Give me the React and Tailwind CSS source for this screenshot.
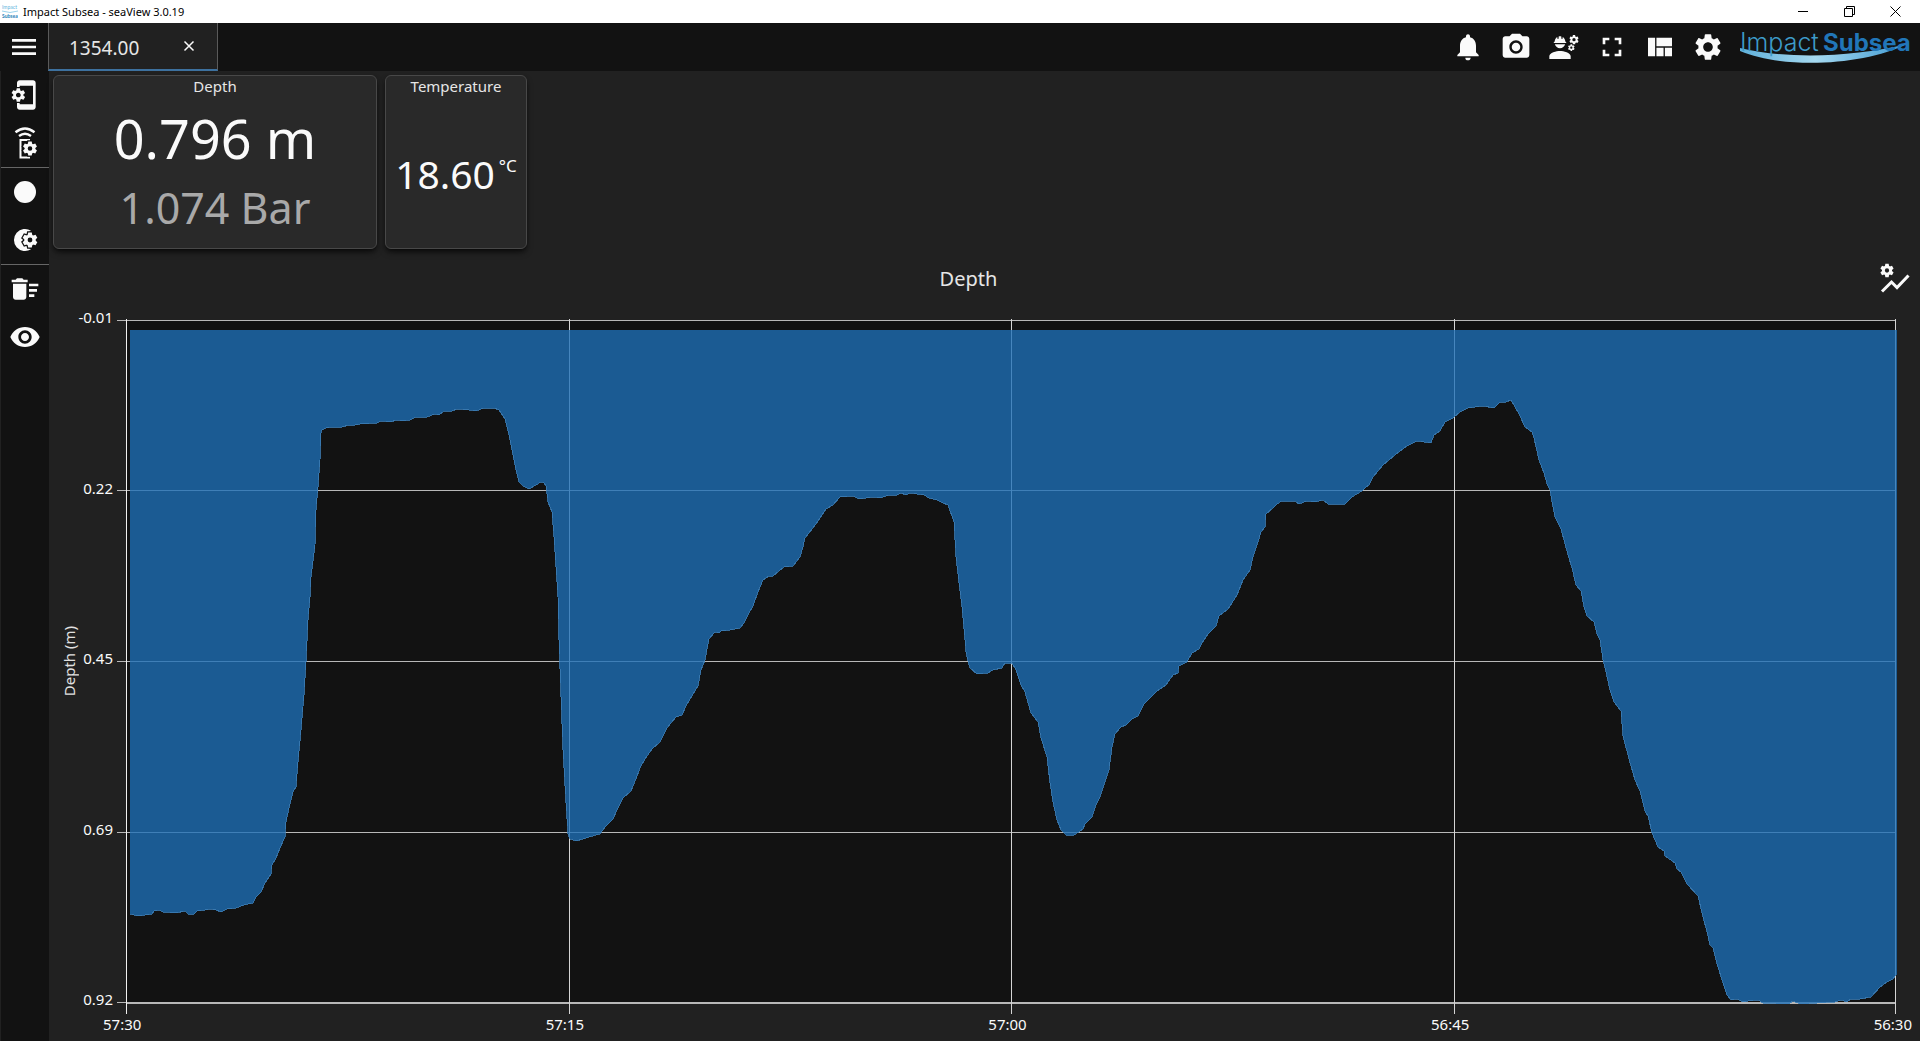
import {
  MdCameraAlt,
  MdDeleteSweep,
  MdEngineering,
  MdFullscreen,
  MdMenu,
  MdNotifications,
  MdPhonelinkSetup,
  MdSettings,
  MdViewQuilt,
  MdVisibility,
} from 'react-icons/md'

// depth trace in chart units, oldest sample first
const TRACE = `130,914 134,915 138,916 145,915 152,914 154,911 159,910 163,912 176,913 185,911 188,914 194,914
197,911 205,910 210,909 216,910 221,912 227,909 236,908 244,905 253,903 256,897 261,892 265,883 271,874 272,865
276,858 280,848 285,837 286,822 289,808 293,792 296,787 298,762 301,730 304,695 306,662 308,620 310,597 311,577
315,545 316,510 318,487 320,460 321,433 322,430 326,428 331,427 342,427 349,425 355,425 360,424 377,423 381,421
390,422 397,420 402,421 410,420 416,417 427,417 435,414 439,415 444,411 452,411 457,409 469,410 476,411 484,408
494,408 499,410 501,413 505,419 509,435 512,450 516,470 519,482 523,486 529,489 536,485 541,482 544,483 546,486
548,502 552,512 554,537 556,567 558,597 559,640 561,697 563,750 566,803 568,834 570,839 576,841 583,839 589,837
600,834 606,826 613,819 618,808 623,798 631,791 633,786 636,779 640,768 645,759 652,749 660,742 667,728 676,717
682,715 686,706 692,696 698,686 701,670 705,660 709,639 715,632 719,633 721,631 730,630 740,628 744,623 749,613
753,606 758,592 763,580 769,576 773,576 784,567 793,566 800,557 803,547 805,538 816,524 826,509 833,505 840,497
853,496 859,499 866,498 874,497 880,498 889,495 897,495 901,493 906,495 910,493 924,495 929,498 937,500 943,503
948,505 954,522 956,557 959,583 962,607 965,640 966,652 968,661 970,668 977,674 988,673 993,670 1002,668 1005,663
1012,663 1016,670 1021,685 1025,692 1031,713 1038,722 1041,738 1047,757 1050,783 1053,802 1057,820 1061,830
1066,835 1074,835 1079,832 1083,829 1085,824 1092,817 1096,805 1100,797 1105,782 1109,770 1112,747 1115,734
1121,727 1126,725 1132,719 1138,716 1144,704 1149,699 1157,691 1166,685 1168,682 1173,675 1178,673 1179,666
1187,662 1192,653 1199,649 1202,643 1208,634 1216,626 1219,616 1228,609 1232,603 1237,595 1243,580 1250,570
1253,557 1258,542 1261,532 1265,527 1266,514 1273,508 1277,504 1282,501 1295,501 1299,504 1307,501 1315,502
1323,500 1328,504 1345,504 1352,497 1362,491 1365,488 1369,485 1373,477 1383,465 1395,455 1407,446 1417,441
1431,443 1434,435 1440,431 1445,422 1453,418 1460,412 1468,408 1483,406 1494,408 1500,402 1506,402 1511,400
1519,414 1525,427 1532,432 1534,438 1539,460 1544,473 1547,484 1550,490 1552,502 1555,517 1561,529 1568,555
1572,568 1576,585 1581,591 1584,607 1587,616 1594,622 1597,634 1600,640 1603,660 1606,672 1610,690 1614,702
1621,711 1623,736 1629,759 1635,780 1640,791 1645,811 1648,816 1652,833 1658,847 1664,851 1665,856 1675,863
1677,869 1681,872 1687,884 1698,896 1702,913 1707,932 1710,945 1713,948 1717,964 1723,983 1727,995 1731,1000
1737,999 1743,1002 1748,1001 1758,1000 1763,1003 1789,1004 1793,1001 1800,1004 1835,1002 1841,1000 1847,1002
1851,999 1860,999 1871,997 1880,987 1887,982 1893,979 1896,975`

const GRID_X = [569, 1011, 1454]
const GRID_Y = [490, 661, 832]
const DEPTH_LABELS = ['-0.01', '0.22', '0.45', '0.69', '0.92']
const TIME_LABELS = ['57:30', '57:15', '57:00', '56:45', '56:30']

const TOOLS = [
  { label: 'Notifications', icon: MdNotifications },
  { label: 'Screenshot', icon: MdCameraAlt },
  { label: 'Engineer tools', icon: MdEngineering },
  { label: 'Full screen', icon: MdFullscreen },
  { label: 'Layout', icon: MdViewQuilt },
  { label: 'Settings', icon: MdSettings },
]

const TEETH = [0, 60, 120, 180, 240, 300]
const TOOTH = 'M-2.4 -4.4L-1.8 -7.400H1.8L2.4 -4.4Z'

// small cog centred on cx, cy
const Cog = ({ cx, cy, scale = 1, outline = false }) => (
  <g transform={`translate(${cx} ${cy}) scale(${scale})`}>
    {outline && (
      <g fill="#121212" stroke="#121212" strokeWidth="2.6">
        <circle r="5.6" />
        {TEETH.map((a) => (
          <path key={a} d={TOOTH} transform={`rotate(${a})`} />
        ))}
      </g>
    )}
    <circle r="4" fill="none" stroke="currentColor" strokeWidth="3.2" />
    {TEETH.map((a) => (
      <path key={a} d={TOOTH} fill="currentColor" stroke="none" transform={`rotate(${a})`} />
    ))}
  </g>
)

const WirelessSetupIcon = () => (
  <svg className="size-8" viewBox="0 0 32 32" fill="none" stroke="currentColor">
    <path d="M6.5 5.2Q16 -2.4 25.5 5.2" strokeWidth="2.4" />
    <path d="M10 9Q16 4.4 22 9" strokeWidth="2.4" />
    <path d="M21 13H11.5V30.500H21" strokeWidth="2" />
    <Cog cx={21} cy={21.5} scale={0.95} outline />
  </svg>
)

const RecordIcon = () => (
  <svg className="size-8" viewBox="0 0 32 32">
    <circle cx="16" cy="16" r="11" fill="currentColor" />
  </svg>
)

const NightSetupIcon = () => (
  <svg className="size-8" viewBox="0 0 32 32">
    <path d="M22 6.800A11 11 0 1 0 22 25.200A10 10 0 0 1 22 6.800Z" fill="currentColor" />
    <Cog cx={21} cy={16} outline />
  </svg>
)

const ChartSetupIcon = () => (
  <svg className="size-8" viewBox="0 0 32 32">
    <Cog cx={7} cy={7.500} scale={0.9} />
    <path d="M2 28.500L11.500 19L17 24.500L28.500 12.500" fill="none" stroke="currentColor" strokeWidth="3" />
  </svg>
)

const SIDE_GROUPS = [
  [
    { label: 'Device setup', icon: MdPhonelinkSetup },
    { label: 'Wireless setup', icon: WirelessSetupIcon },
  ],
  [
    { label: 'Record', icon: RecordIcon },
    { label: 'Night mode setup', icon: NightSetupIcon },
  ],
  [
    { label: 'Clear data', icon: MdDeleteSweep },
    { label: 'Visibility', icon: MdVisibility },
  ],
]

const Logo = () => (
  <svg className="mr-1 h-12 w-[176px]" viewBox="0 0 176 48" role="img" aria-label="Impact Subsea">
    <defs>
      <linearGradient id="swoosh">
        <stop offset="0" stopColor="#5fb0da" />
        <stop offset="0.45" stopColor="#a5d8ef" />
        <stop offset="1" stopColor="#3f9ad2" />
      </linearGradient>
    </defs>
    <path d="M0 25C45 36 110 35 167 21C125 42 45 47 0 28Z" fill="url(#swoosh)" />
    <g fontFamily="Inter, sans-serif">
      <text x="0" y="28" fill="#3d9bc9" fontSize="25" fontWeight="300">Impact</text>
      <text x="83" y="28" fill="#2176b8" fontSize="24" fontWeight="700">Subsea</text>
    </g>
  </svg>
)

const TitleBar = () => (
  <div className="flex h-[23px] shrink-0 items-center bg-white text-black">
    <svg className="ml-0.5 size-4" viewBox="0 0 16 16" aria-hidden="true">
      <g fontFamily="Lato, sans-serif" fontSize="5">
        <text x="0" y="5" fill="#5fb4dd">Impact</text>
        <text x="0" y="14" fill="#2b7fb8" fontWeight="700">Subsea</text>
      </g>
      <path d="M0 7Q8 10 16 7" fill="none" stroke="#9bd3ec" />
    </svg>
    <span className="ml-[5px] text-[11px] leading-4">Impact Subsea - seaView 3.0.19</span>
    <div className="mr-0.5 ml-auto flex h-full">
      <button aria-label="Minimise" className="flex w-[46px] items-center justify-center">
        <svg className="size-[11px]" viewBox="0 0 11 11" stroke="currentColor"><path d="M0 5.500H10" /></svg>
      </button>
      <button aria-label="Restore" className="flex w-[46px] items-center justify-center">
        <svg className="size-[11px]" viewBox="0 0 11 11" fill="none" stroke="currentColor">
          <path d="M.5 2.500H8.500V10.500H.5ZM2.500 2.500V.5H10.500V8.500H8.500" />
        </svg>
      </button>
      <button aria-label="Close" className="flex w-[46px] items-center justify-center">
        <svg className="size-[11px]" viewBox="0 0 11 11" stroke="currentColor"><path d="M.5 .5L10.500 10.500M10.500 .5L.5 10.500" /></svg>
      </button>
    </div>
  </div>
)

const Header = () => (
  <header className="flex h-12 shrink-0 bg-[#121212]">
    <button aria-label="Menu" className="flex w-12 items-center justify-center">
      <MdMenu className="size-8" />
    </button>
    <div className="flex w-[170px] items-center justify-between border-x border-b-2 border-x-[#5a5a5a] border-b-[#3d719f] bg-[#212121] pr-[22px] pl-5">
      <span className="pt-1 text-[19px] leading-6 text-[#e6e6e6]">1354.00</span>
      <button aria-label="Close tab">
        <svg className="size-3" viewBox="0 0 12 12" stroke="currentColor" strokeWidth="1.500"><path d="M1.500 1.500L10.500 10.500M10.500 1.500L1.500 10.500" /></svg>
      </button>
    </div>
    <div className="ml-auto flex items-center">
      {TOOLS.map(({ label, icon: Icon }) => (
        <button key={label} aria-label={label} className="flex size-12 items-center justify-center">
          <Icon className="size-8" />
        </button>
      ))}
      <div className="pl-2">
        <Logo />
      </div>
    </div>
  </header>
)

const Sidebar = () => (
  <nav className="w-[49px] shrink-0 divide-y divide-[#666] border-l border-[#212121] bg-[#121212]">
    {SIDE_GROUPS.map((group, i) => (
      <div key={i}>
        {group.map(({ label, icon: Icon }) => (
          <button key={label} aria-label={label} className="flex size-12 items-center justify-center">
            <Icon className="size-8" />
          </button>
        ))}
      </div>
    ))}
  </nav>
)

const Card = ({ title, className, children }) => (
  <section className={`flex h-[174px] flex-col items-center rounded-md border border-[#484848] bg-[#292929] shadow-md shadow-black/60 ${className}`}>
    <h2 className="text-[15px] leading-5 text-[#e6e6e6]">{title}</h2>
    {children}
  </section>
)

const DepthChart = () => (
  <section className="flex min-h-0 flex-1 flex-col">
    <div className="flex h-[60px] shrink-0 items-center px-2">
      <h2 className="flex-1 text-center text-[20px] leading-6 text-[#e6e6e6]">Depth</h2>
      <button aria-label="Chart setup">
        <ChartSetupIcon />
      </button>
    </div>
    <div className="flex min-h-0 flex-1 pr-[23px] pl-[11px] text-[15px] leading-4">
      <div className="flex w-[18px] items-center justify-center">
        <span className="rotate-180 text-[#e0e0e0] [writing-mode:vertical-rl]">Depth (m)</span>
      </div>
      <div className="mr-1 flex w-[35px] flex-col justify-between pb-[7px] text-right">
        {DEPTH_LABELS.map((d) => (
          <span key={d}>{d}</span>
        ))}
      </div>
      <div className="min-h-0 min-w-0 flex-1">
        <svg className="block h-full w-full" viewBox="117 309 1780 705" preserveAspectRatio="none" shapeRendering="crispEdges">
          <rect x="126" y="320" width="1770" height="683" fill="#121212" />
          <g stroke="#b8b8b8">
            <path d="M117 320.500H1896" />
            {GRID_Y.map((y) => (
              <path key={y} d={`M117 ${y}.5H1896`} />
            ))}
            <path d="M117 1002.500H127" />
            <path d="M126 1003H1896" strokeWidth="2" />
          </g>
          <g stroke="#d4d4d4">
            <path d="M126.500 319V1014" stroke="#f0f0f0" />
            {GRID_X.map((x) => (
              <path key={x} d={`M${x}.5 319V1014`} />
            ))}
            <path d="M1895.500 319V1014" />
          </g>
          <polygon points={`130,330 ${TRACE} 1897,975 1897,330`} fill="#1e70b7" fillOpacity="0.78" />
          <polyline points={TRACE} fill="none" stroke="#3f7fb8" strokeOpacity="0.8" />
        </svg>
      </div>
    </div>
    <div className="flex h-[27px] shrink-0 justify-between pr-2 pl-[54px] text-[15px] leading-5">
      {TIME_LABELS.map((t) => (
        <span key={t}>{t}</span>
      ))}
    </div>
  </section>
)

const App = () => {
  return (
    <div className="flex h-screen flex-col bg-[#212121] font-['Noto_Sans','Open_Sans',sans-serif] text-[#fafafa]">
      <TitleBar />
      <Header />
      <div className="flex min-h-0 flex-1">
        <Sidebar />
        <main className="flex min-w-0 flex-1 flex-col pt-1">
          <div className="flex gap-2 pl-1">
            <Card title="Depth" className="w-[324px]">
              <p className="mt-2 text-[54px] leading-[68px]">0.796 m</p>
              <p className="text-[43px] leading-[72px] text-[#a9a9a9]">1.074 Bar</p>
            </Card>
            <Card title="Temperature" className="w-[142px]">
              <p className="flex flex-1 items-center gap-1 pt-1">
                <span className="text-[39px] leading-[50px]">18.60</span>
                <span className="pb-4 text-[17px] leading-5">°C</span>
              </p>
            </Card>
          </div>
          <DepthChart />
        </main>
      </div>
    </div>
  )
}

export default App
